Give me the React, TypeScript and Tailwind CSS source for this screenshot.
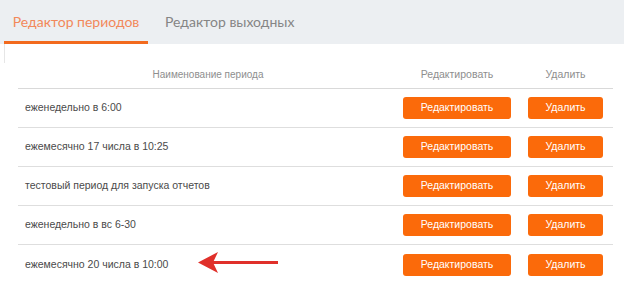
import React from "react";

interface Period {
  id: number;
  name: string;
}

const periods: Period[] = [
  { id: 1, name: "еженедельно в 6:00" },
  { id: 2, name: "ежемесячно 17 числа в 10:25" },
  { id: 3, name: "тестовый период для запуска отчетов" },
  { id: 4, name: "еженедельно в вс 6-30" },
  { id: 5, name: "ежемесячно 20 числа в 10:00" },
];

const btnClasses =
  "h-[22px] rounded-[3px] bg-[#fb6a0a] text-white text-[10.5px] flex items-center justify-center";

const App = () => {
  return (
    <div className="relative w-[624px] h-[291px] overflow-hidden bg-white font-['Liberation_Sans',Arial,sans-serif]">
      {/* Tabs */}
      <div className="h-[44px] bg-[#eceff2] flex items-end pl-[4px] font-['Lato',sans-serif]">
        <div className="w-[144px] h-[44px] border-b-[3px] border-[#f26a1e] flex items-center justify-center pt-[2px] text-[14px] text-[#f2885a]">
          Редактор периодов
        </div>
        <div className="h-[44px] flex items-center pl-[17px] pb-[1px] text-[14px] text-[#858585]">
          Редактор выходных
        </div>
      </div>

      {/* Card edge */}
      <div className="ml-[4px] h-[19px] border-l border-[#e6e6e6]" />

      {/* Table */}
      <div className="ml-[18px] w-[595px]">
        <div className="h-[26px] flex items-center border-b border-[#d9d9d9] text-[10px] text-[#8e8e8e] pb-[2px]">
          <div className="w-[380px] flex justify-center">Наименование периода</div>
          <div className="w-[118px] flex justify-center text-[10.5px]">Редактировать</div>
          <div className="w-[97px] flex justify-center pl-[2px] text-[10.5px]">Удалить</div>
        </div>
        {periods.map((p, i) => (
          <div
            key={p.id}
            className={`h-[39px] flex items-center text-[10.5px] text-[#4a4a4a] ${
              i < periods.length - 1 ? "border-b border-[#dedede]" : ""
            }`}
          >
            <div className="w-[380px] pl-[7px]">{p.name}</div>
            <div className="w-[118px] flex justify-center">
              <button className={`${btnClasses} w-[108px]`}>Редактировать</button>
            </div>
            <div className="w-[97px] flex justify-center pl-[2px]">
              <button className={`${btnClasses} w-[75px]`}>Удалить</button>
            </div>
          </div>
        ))}
      </div>

      {/* Red arrow pointing at last row */}
      <svg
        className="absolute left-[196px] top-[251px]"
        width="84"
        height="24"
        viewBox="0 0 84 24"
      >
        <line x1="16" y1="11.5" x2="82" y2="11.5" stroke="#e0302a" strokeWidth="3" />
        <polygon points="2,11.5 22,1 17,11.5 22,22" fill="#e0302a" />
      </svg>
    </div>
  );
};

export default App;
